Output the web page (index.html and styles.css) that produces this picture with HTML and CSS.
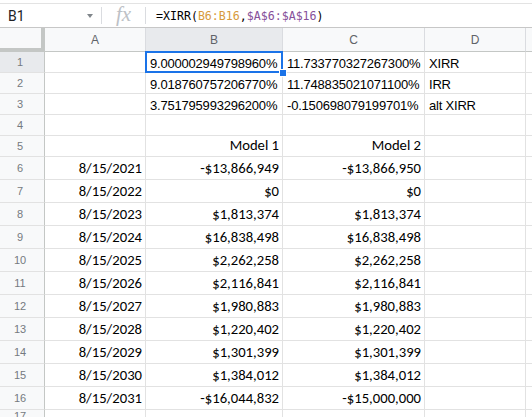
FILE: index.html
```html
<!DOCTYPE html>
<html>
<head>
<meta charset="utf-8">
<link rel="stylesheet" href="styles.css">
</head>
<body>
<div class="fbar">
  <div class="namebox"><span class="ref">B1</span><span class="arrow"></span></div>
  <div class="divider"></div>
  <div class="fx">fx</div>
  <div class="divider"></div>
  <div class="formula">=XIRR(<span class="r1">B6:B16</span>,<span class="r2">$A$6:$A$16</span>)</div>
</div>
<div class="sheet">
  <div class="corner"></div>
  <div class="ch">A</div><div class="ch on">B</div><div class="ch">C</div><div class="ch">D</div><div class="ch last"></div>

  <div class="rh on">1</div><div class="c"></div><div class="c l sel">9.000002949798960%<span class="handle"></span></div><div class="c l">11.733770327267300%</div><div class="c l">XIRR</div><div class="c"></div>
  <div class="rh">2</div><div class="c"></div><div class="c l">9.018760757206770%</div><div class="c l">11.748835021071100%</div><div class="c l">IRR</div><div class="c"></div>
  <div class="rh">3</div><div class="c"></div><div class="c l">3.751795993296200%</div><div class="c l">-0.150698079199701%</div><div class="c l">alt XIRR</div><div class="c"></div>
  <div class="rh">4</div><div class="c"></div><div class="c"></div><div class="c"></div><div class="c"></div><div class="c"></div>
  <div class="rh">5</div><div class="c"></div><div class="c r k">Model 1</div><div class="c r k">Model 2</div><div class="c"></div><div class="c"></div>
  <div class="rh">6</div><div class="c r k">8/15/2021</div><div class="c r k">-$13,866,949</div><div class="c r k">-$13,866,950</div><div class="c"></div><div class="c"></div>
  <div class="rh">7</div><div class="c r k">8/15/2022</div><div class="c r k">$0</div><div class="c r k">$0</div><div class="c"></div><div class="c"></div>
  <div class="rh">8</div><div class="c r k">8/15/2023</div><div class="c r k">$1,813,374</div><div class="c r k">$1,813,374</div><div class="c"></div><div class="c"></div>
  <div class="rh">9</div><div class="c r k">8/15/2024</div><div class="c r k">$16,838,498</div><div class="c r k">$16,838,498</div><div class="c"></div><div class="c"></div>
  <div class="rh">10</div><div class="c r k">8/15/2025</div><div class="c r k">$2,262,258</div><div class="c r k">$2,262,258</div><div class="c"></div><div class="c"></div>
  <div class="rh">11</div><div class="c r k">8/15/2026</div><div class="c r k">$2,116,841</div><div class="c r k">$2,116,841</div><div class="c"></div><div class="c"></div>
  <div class="rh">12</div><div class="c r k">8/15/2027</div><div class="c r k">$1,980,883</div><div class="c r k">$1,980,883</div><div class="c"></div><div class="c"></div>
  <div class="rh">13</div><div class="c r k">8/15/2028</div><div class="c r k">$1,220,402</div><div class="c r k">$1,220,402</div><div class="c"></div><div class="c"></div>
  <div class="rh">14</div><div class="c r k">8/15/2029</div><div class="c r k">$1,301,399</div><div class="c r k">$1,301,399</div><div class="c"></div><div class="c"></div>
  <div class="rh">15</div><div class="c r k">8/15/2030</div><div class="c r k">$1,384,012</div><div class="c r k">$1,384,012</div><div class="c"></div><div class="c"></div>
  <div class="rh">16</div><div class="c r k">8/15/2031</div><div class="c r k">-$16,044,832</div><div class="c r k">-$15,000,000</div><div class="c"></div><div class="c"></div>
  <div class="rh">17</div><div class="c"></div><div class="c"></div><div class="c"></div><div class="c"></div><div class="c"></div>
</div>
</body>
</html>
```
FILE: styles.css
```css
html, body {
  margin: 0;
  padding: 0;
  background: #fff;
  overflow: hidden;
}
body {
  font-family: "Liberation Sans", Arial, sans-serif;
  color: #000;
  width: 532px;
  height: 417px;
}
.fbar {
  margin-top: 3px;
  height: 25px;
  box-sizing: border-box;
  border-top: 1px solid #e3e3e3;
  border-bottom: 1px solid #c7c7c7;
  display: flex;
  align-items: center;
}
.namebox {
  width: 101px;
  height: 100%;
  display: flex;
  align-items: center;
  box-sizing: border-box;
  padding-left: 8px;
}
.ref {
  font-family: Roboto, "Liberation Sans", sans-serif;
  font-size: 14px;
  color: #202124;
  flex: 1;
}
.arrow {
  width: 0;
  height: 0;
  border-left: 3.5px solid transparent;
  border-right: 3.5px solid transparent;
  border-top: 4px solid #80868b;
  margin-right: 8px;
  margin-top: 1px;
}
.divider {
  width: 1px;
  height: 17px;
  background: #dadce0;
}
.fx {
  width: 43px;
  text-align: center;
  font-family: "Liberation Serif", serif;
  font-style: italic;
  font-size: 21px;
  color: #bdc1c6;
  line-height: 22px;
  margin-top: -3px;
}
.formula {
  padding-left: 10px;
  font-family: "DejaVu Sans Mono", "Liberation Mono", monospace;
  font-size: 11.6px;
  color: #000;
}
.r1 { color: #d79a3b; }
.r2 { color: #86509a; }

.sheet {
  display: grid;
  grid-template-columns: 45px 101px 137px 142px 101px 1fr;
  grid-template-rows: 24px repeat(5, 21px) repeat(11, 23px) 1fr;
  height: 389px;
}
.sheet > div {
  box-sizing: border-box;
  border-right: 1px solid #e2e2e2;
  border-bottom: 1px solid #e2e2e2;
}
.corner {
  background: #f8f9fa;
  border-right: 4px solid #c4c7c5 !important;
  border-bottom: 4px solid #c4c7c5 !important;
}
.ch {
  background: #f8f9fa;
  border-bottom: 1px solid #c4c7c5 !important;
  border-right: 1px solid #dadce0 !important;
  color: #5f6368;
  font-size: 12px;
  display: flex;
  align-items: center;
  justify-content: center;
  padding-top: 1px;
}
.ch.on, .rh.on { background: #e8eaed; }
.rh {
  background: #f8f9fa;
  border-right: 1px solid #c4c7c5 !important;
  color: #757a80;
  font-size: 11px;
  display: flex;
  align-items: center;
  justify-content: center;
  padding-right: 4px;
}
.c {
  display: flex;
  align-items: flex-end;
  padding: 0 3px 1px 3px;
  font-size: 13px;
  line-height: 15px;
  letter-spacing: -0.2px;
  white-space: nowrap;
  overflow: visible;
}
.c.l { justify-content: flex-start; padding-left: 4px; }
.c.r { justify-content: flex-end; }
.c.k {
  font-family: Carlito, Calibri, "Liberation Sans", sans-serif;
  font-size: 14.67px;
  letter-spacing: 0;
  line-height: 17px;
  padding-bottom: 2px;
}
.sel { position: relative; }
.sel::after {
  content: "";
  position: absolute;
  left: -1px;
  top: -1px;
  right: -1px;
  bottom: -1px;
  border: 2px solid #1a73e8;
}
.handle {
  position: absolute;
  right: -5px;
  bottom: -5px;
  width: 6px;
  height: 6px;
  background: #1a73e8;
  border: 1px solid #fff;
  z-index: 2;
}
```
